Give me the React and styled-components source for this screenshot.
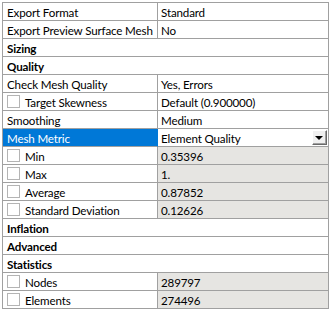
import React from "react";
import styled, { createGlobalStyle } from "styled-components";

const GlobalStyle = createGlobalStyle`
  html, body {
    margin: 0;
    padding: 0;
    background: #fff;
  }
  body {
    font-family: "Segoe UI", Lato, "Noto Sans", sans-serif;
    font-size: 11.6px;
    letter-spacing: -0.15px;
    color: #000;
  }
`;

const Panel = styled.div`
  padding: 2px 0 0 2px;
`;

const Grid = styled.div`
  display: grid;
  grid-template-columns: 155px 171px;
  width: 327px;
  box-sizing: border-box;
  border-top: 1px solid #a0a0a0;
  border-left: 1px solid #a0a0a0;
`;

const Cell = styled.div`
  box-sizing: border-box;
  height: 18px;
  line-height: 17px;
  border-right: 1px solid ${(p) => (p.selected ? "#0078d7" : "#a0a0a0")};
  border-bottom: 1px solid #a0a0a0;
  padding-left: 4px;
  padding-top: 1px;
  display: flex;
  align-items: center;
  gap: 5px;
  white-space: nowrap;
  overflow: hidden;
  background: ${(p) => (p.selected ? "#0078d7" : p.readonly ? "#e6e5e2" : "#fff")};
  color: ${(p) => (p.selected ? "#fff" : "#000")};
`;

const Section = styled(Cell)`
  grid-column: 1 / span 2;
  font-weight: bold;
`;

const ValueCell = styled(Cell)`
  padding-left: 3px;
  position: relative;
`;

const Check = styled.span`
  box-sizing: border-box;
  width: 13px;
  height: 13px;
  flex: none;
  margin-top: -1px;
  border: 1px solid #b4b4b4;
  background: #fff;
`;

const DropButton = styled.span`
  position: absolute;
  right: 1px;
  top: 1px;
  width: 15px;
  height: 15px;
  box-sizing: border-box;
  background: #f0f0f0;
  border-top: 1px solid #fff;
  border-left: 1px solid #fff;
  border-right: 1px solid #696969;
  border-bottom: 1px solid #696969;
  box-shadow: inset -1px -1px 0 #a0a0a0;
  display: flex;
  align-items: center;
  justify-content: center;
  &::after {
    content: "";
    border-left: 4px solid transparent;
    border-right: 4px solid transparent;
    border-top: 4px solid #000;
    margin-left: -1px;
  }
`;

const rows = [
  { label: "Export Format", value: "Standard" },
  { label: "Export Preview Surface Mesh", value: "No" },
  { section: "Sizing" },
  { section: "Quality" },
  { label: "Check Mesh Quality", value: "Yes, Errors" },
  { label: "Target Skewness", value: "Default (0.900000)", check: true },
  { label: "Smoothing", value: "Medium" },
  { label: "Mesh Metric", value: "Element Quality", selected: true, drop: true },
  { label: "Min", value: "0.35396", check: true, readonly: true },
  { label: "Max", value: "1.", check: true, readonly: true },
  { label: "Average", value: "0.87852", check: true, readonly: true },
  { label: "Standard Deviation", value: "0.12626", check: true, readonly: true },
  { section: "Inflation" },
  { section: "Advanced" },
  { section: "Statistics" },
  { label: "Nodes", value: "289797", check: true, readonly: true },
  { label: "Elements", value: "274496", check: true, readonly: true },
];

const App = () => {
  return (
    <Panel>
      <GlobalStyle />
      <Grid>
        {rows.map((r, i) =>
          r.section ? (
            <Section key={i}>{r.section}</Section>
          ) : (
            <React.Fragment key={i}>
              <Cell selected={r.selected}>
                {r.check && <Check />}
                {r.label}
              </Cell>
              <ValueCell readonly={r.readonly}>
                {r.value}
                {r.drop && <DropButton />}
              </ValueCell>
            </React.Fragment>
          )
        )}
      </Grid>
    </Panel>
  );
};

export default App;
